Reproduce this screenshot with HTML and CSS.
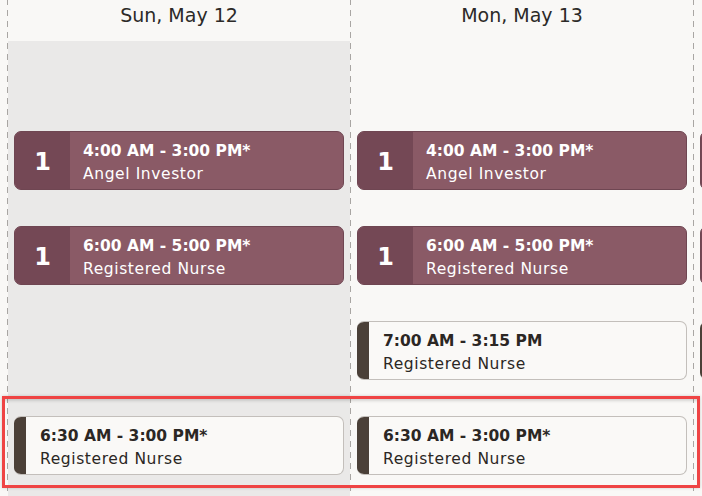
FILE: index.html
```html
<!DOCTYPE html>
<html>
<head>
<meta charset="utf-8">
<link rel="stylesheet" href="styles.css">
</head>
<body>
<div class="week">
  <div class="day">
    <div class="day-head">Sun, May 12</div>
    <div class="day-body shaded">
      <div class="slot">
        <div class="shift open">
          <div class="count">1</div>
          <div class="info"><div class="time">4:00 AM - 3:00 PM*</div><div class="role">Angel Investor</div></div>
        </div>
      </div>
      <div class="slot">
        <div class="shift open">
          <div class="count">1</div>
          <div class="info"><div class="time">6:00 AM - 5:00 PM*</div><div class="role">Registered Nurse</div></div>
        </div>
      </div>
      <div class="slot"></div>
      <div class="slot">
        <div class="shift mine">
          <div class="bar"></div>
          <div class="info"><div class="time">6:30 AM - 3:00 PM*</div><div class="role">Registered Nurse</div></div>
        </div>
      </div>
    </div>
  </div>
  <div class="day">
    <div class="day-head">Mon, May 13</div>
    <div class="day-body">
      <div class="slot">
        <div class="shift open">
          <div class="count">1</div>
          <div class="info"><div class="time">4:00 AM - 3:00 PM*</div><div class="role">Angel Investor</div></div>
        </div>
      </div>
      <div class="slot">
        <div class="shift open">
          <div class="count">1</div>
          <div class="info"><div class="time">6:00 AM - 5:00 PM*</div><div class="role">Registered Nurse</div></div>
        </div>
      </div>
      <div class="slot">
        <div class="shift mine">
          <div class="bar"></div>
          <div class="info"><div class="time">7:00 AM - 3:15 PM</div><div class="role">Registered Nurse</div></div>
        </div>
      </div>
      <div class="slot">
        <div class="shift mine">
          <div class="bar"></div>
          <div class="info"><div class="time">6:30 AM - 3:00 PM*</div><div class="role">Registered Nurse</div></div>
        </div>
      </div>
    </div>
  </div>
  <div class="day next">
    <div class="day-head"></div>
    <div class="day-body">
      <div class="slot"><div class="shift open"><div class="count"></div></div></div>
      <div class="slot"><div class="shift open"><div class="count"></div></div></div>
      <div class="slot"><div class="shift mine"><div class="bar"></div></div></div>
      <div class="slot"></div>
    </div>
  </div>
  <div class="selection"></div>
</div>
</body>
</html>
```
FILE: styles.css
```css
html, body {
  margin: 0;
  padding: 0;
  overflow: hidden;
  background: #f9f8f6;
}
body {
  font-family: "DejaVu Sans", "Noto Sans", sans-serif;
  color: #2b2724;
}
.week {
  position: relative;
  display: flex;
  height: 496px;
  width: 702px;
  overflow: hidden;
  box-sizing: border-box;
  padding-left: 7px;
}
.day {
  flex: 0 0 343px;
  box-sizing: border-box;
  display: flex;
  flex-direction: column;
  border-left: 1px solid #a9a6a3;
  border-image: repeating-linear-gradient(to bottom, #a9a6a3 0 6px, transparent 6px 11px) 1;
}
.day-head {
  height: 41px;
  display: flex;
  align-items: center;
  justify-content: center;
  font-size: 19px;
  padding-bottom: 12px;
  box-sizing: border-box;
  color: #2c2a28;
}
.day-body {
  flex: 1;
  padding-top: 71px;
}
.day-body.shaded {
  background: #eae9e8;
}
.slot {
  height: 95px;
  box-sizing: border-box;
  padding: 19px 6px 0 6px;
}
.shift {
  display: flex;
  height: 59px;
  box-sizing: border-box;
  border-radius: 7px;
  overflow: hidden;
}
.shift.open {
  background: #8a5a66;
  border: 1px solid #6f4652;
  color: #ffffff;
}
.shift.mine {
  background: #faf9f7;
  border: 1.5px solid #c3bfbb;
  border-left: none;
}
.count {
  flex: 0 0 55px;
  background: #744855;
  display: flex;
  align-items: center;
  justify-content: center;
  padding-top: 2px;
  box-sizing: border-box;
  font-size: 24px;
  font-weight: 700;
}
.bar {
  flex: 0 0 12px;
  background: #4b4038;
}
.info {
  display: flex;
  flex-direction: column;
  justify-content: center;
  padding-left: 13px;
  padding-top: 5px;
  font-size: 15.5px;
  line-height: 23px;
}
.shift.mine .info {
  padding-left: 14px;
}
.time {
  font-weight: 700;
}
.role {
  letter-spacing: 0.6px;
}
.selection {
  position: absolute;
  left: 2px;
  top: 396px;
  width: 698px;
  height: 92px;
  box-sizing: border-box;
  border: 3px solid #ef4444;
  box-shadow: inset 0 4px 3px -2px rgba(0,0,0,0.14), 0 0 3px rgba(0,0,0,0.18);
}
```
